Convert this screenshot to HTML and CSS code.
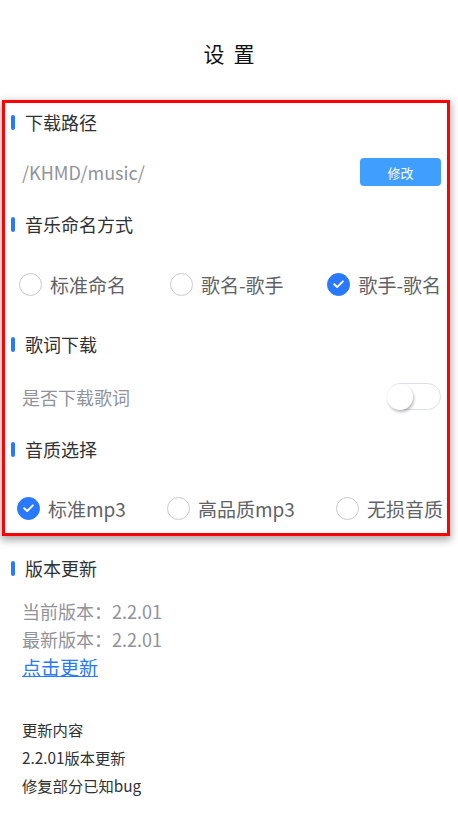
FILE: index.html
```html
<!DOCTYPE html>
<html lang="zh-CN">
<head>
<meta charset="utf-8">
<title>设置</title>
<link rel="stylesheet" href="styles.css">
</head>
<body>
<div class="page">
  <div class="title">设置</div>

  <div class="settings">
    <div class="head"><span class="bar"></span><span>下载路径</span></div>
    <div class="row path-row">
      <span class="muted">/KHMD/music/</span>
      <button class="btn">修改</button>
    </div>

    <div class="head"><span class="bar"></span><span>音乐命名方式</span></div>
    <div class="radios radios-a">
      <label class="radio"><span class="circle"></span><span>标准命名</span></label>
      <label class="radio"><span class="circle"></span><span>歌名-歌手</span></label>
      <label class="radio"><span class="circle on"><svg viewBox="0 0 22 22" width="22" height="22"><path d="M6.5 11.2 L9.6 14.2 L15.6 8.2" fill="none" stroke="#fff" stroke-width="2" stroke-linecap="round" stroke-linejoin="round"/></svg></span><span>歌手-歌名</span></label>
    </div>

    <div class="head"><span class="bar"></span><span>歌词下载</span></div>
    <div class="row switch-row">
      <span class="muted">是否下载歌词</span>
      <span class="switch"><span class="knob"></span></span>
    </div>

    <div class="head"><span class="bar"></span><span>音质选择</span></div>
    <div class="radios radios-b">
      <label class="radio"><span class="circle on"><svg viewBox="0 0 22 22" width="22" height="22"><path d="M6.5 11.2 L9.6 14.2 L15.6 8.2" fill="none" stroke="#fff" stroke-width="2" stroke-linecap="round" stroke-linejoin="round"/></svg></span><span>标准mp3</span></label>
      <label class="radio"><span class="circle"></span><span>高品质mp3</span></label>
      <label class="radio"><span class="circle"></span><span>无损音质</span></label>
    </div>
  </div>

  <div class="version">
    <div class="head"><span class="bar"></span><span>版本更新</span></div>
    <div class="vinfo">
      <div class="muted">当前版本：2.2.01</div>
      <div class="muted">最新版本：2.2.01</div>
      <a class="link" href="#">点击更新</a>
    </div>
    <div class="notes">
      <div>更新内容</div>
      <div>2.2.01版本更新</div>
      <div>修复部分已知bug</div>
    </div>
  </div>
</div>
</body>
</html>
```

FILE: styles.css
```css
* { box-sizing: border-box; }
html, body { margin: 0; padding: 0; background: #fff; }
body {
  font-family: "Noto Sans CJK SC", "Noto Sans", sans-serif;
  font-size: 18px;
  color: #303133;
  width: 458px;
  height: 820px;
  overflow: hidden;
}

.title {
  height: 103px;
  padding-top: 3px;
  display: flex;
  align-items: center;
  justify-content: center;
  font-size: 21px;
  letter-spacing: 9px;
  text-indent: 9px;
  color: #111;
}

.settings {
  margin-left: 5px;
  width: 442px;
  background: #fff;
  box-shadow: 0 0 0 3px #ff0000, 0 3px 8px 4px rgba(0, 0, 0, 0.35);
}

.head {
  display: flex;
  align-items: center;
  height: 42px;
  padding-left: 6px;
  color: #303133;
}
.settings > .head:first-child { height: 38px; }
.bar {
  width: 4px;
  height: 15px;
  border-radius: 2px;
  background: #2979ff;
  margin-right: 10px;
}

.row {
  display: flex;
  align-items: center;
  justify-content: space-between;
  padding-left: 17px;
  padding-right: 6px;
}
.path-row { height: 62px; }
.switch-row { height: 63px; }

.muted { color: #909399; }

.btn {
  width: 81px;
  height: 28px;
  border: none;
  border-radius: 4px;
  background: #409eff;
  color: #fff;
  font-family: inherit;
  font-size: 13px;
  padding: 0;
}

.radios {
  display: flex;
  align-items: center;
  justify-content: space-between;
  color: #606266;
  font-size: 19px;
}
.radios-a { height: 78px; padding-left: 14px; padding-right: 6px; }
.radios-b { padding: 26px 4px 13px 12px; height: 63px; }

.radio {
  display: flex;
  align-items: center;
  gap: 8px;
}
.circle {
  width: 23px;
  height: 23px;
  border-radius: 50%;
  border: 1px solid #c8c9cc;
  display: flex;
  align-items: center;
  justify-content: center;
}
.circle.on {
  border-color: #2979ff;
  background: #2979ff;
}

.switch {
  width: 54px;
  height: 27px;
  border-radius: 14px;
  border: 1px solid #dcdfe6;
  background: #fff;
  display: flex;
  align-items: center;
}
.knob {
  width: 26px;
  height: 26px;
  border-radius: 50%;
  background: #fff;
  margin-left: -1px;
  box-shadow: 1px 2px 3px rgba(0, 0, 0, 0.28);
}

.version {
  padding-top: 16px;
  padding-left: 5px;
}
.version .head { height: 38px; }

.vinfo {
  padding-left: 17px;
  padding-top: 11px;
  line-height: 27.5px;
}
.link {
  color: #2979ff;
  text-decoration: underline;
  display: inline-block;
  font-size: 19px;
}

.notes {
  padding-left: 17px;
  padding-top: 33px;
  font-size: 15.3px;
  line-height: 28px;
  color: #303133;
}
```
